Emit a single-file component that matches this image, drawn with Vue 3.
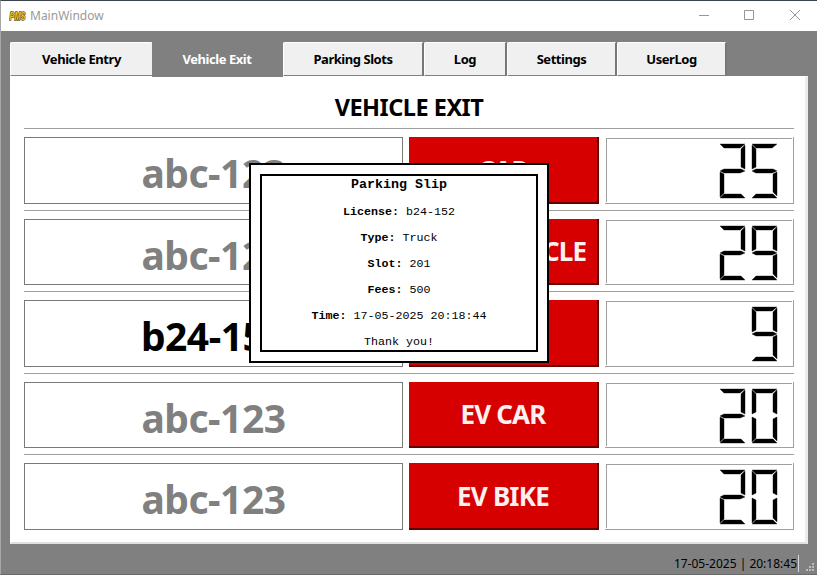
<script setup>
import { ref } from 'vue'

const tabs = [
  { label: 'Vehicle Entry', size: 'entry' },
  { label: 'Vehicle Exit', size: 'exit' },
  { label: 'Parking Slots', size: 'slots' },
  { label: 'Log', size: 'log' },
  { label: 'Settings', size: 'settings' },
  { label: 'UserLog', size: 'user' },
]
const active = ref('Vehicle Exit')

const rows = [
  { plate: 'abc-123', type: 'CAR', free: '25' },
  { plate: 'abc-123', type: 'MOTORCYCLE', free: '29' },
  { plate: 'b24-152', type: 'TRUCK', free: '9', filled: true },
  { plate: 'abc-123', type: 'EV CAR', free: '20' },
  { plate: 'abc-123', type: 'EV BIKE', free: '20' },
]

const slip = [
  ['License:', 'b24-152'],
  ['Type:', 'Truck'],
  ['Slot:', '201'],
  ['Fees:', '500'],
  ['Time:', '17-05-2025 20:18:44'],
]

// Seven-segment outlines on a 27 x 56 cell
const segments = {
  a: '1,1 26,1 21,5 5,5',
  b: '26,2 26,26 22,24 22,6',
  c: '26,29 26,53 22,49 22,31',
  d: '1,55 26,55 22,51 5,51',
  e: '1,29 5,31 5,50 1,54',
  f: '1,2 5,6 5,24 1,26',
  g: '1,28 5,26 22,26 26,28 21,30 5,30',
}
const lit = {
  0: 'abcdef',
  2: 'abged',
  5: 'afgcd',
  9: 'abcdfg',
}
</script>

<template>
  <div class="window">
    <header class="titlebar">
      <svg class="logo" width="18" height="12" viewBox="0 0 18 12">
        <text x="0.5" y="10" textLength="16" lengthAdjust="spacingAndGlyphs">PMS</text>
      </svg>
      <span class="caption">MainWindow</span>
      <svg class="controls" width="103" height="12" viewBox="0 0 103 12">
        <path d="M0 5.5H10M45.5 .5H54.5V9.5H45.5ZM91 0L101 10M101 0L91 10" />
      </svg>
    </header>

    <nav class="tabs">
      <button
        v-for="tab in tabs"
        :key="tab.label"
        :class="['tab', tab.size, { active: tab.label === active }]"
        @click="active = tab.label"
      >{{ tab.label }}</button>
    </nav>

    <main class="panel">
      <h1><span>VEHICLE EXIT</span></h1>
      <section v-for="(row, i) in rows" :key="i" class="row">
        <div :class="['plate', { filled: row.filled }]"><span>{{ row.plate }}</span></div>
        <button class="type"><span>{{ row.type }}</span></button>
        <div class="lcd">
          <div class="lcd-face">
            <svg v-for="(d, n) in row.free" :key="n" width="27" height="56" viewBox="0 0 27 56">
              <g v-for="s in lit[d]" :key="s">
                <polygon class="shade" :points="segments[s]" />
                <polygon :points="segments[s]" />
              </g>
            </svg>
          </div>
        </div>
      </section>
    </main>

    <footer class="status">
      <span class="clock">17-05-2025 | 20:18:45</span>
      <svg class="grip" width="9" height="9" viewBox="0 0 9 9">
        <path d="M6 0h2v2h-2zM3 3h2v2h-2zM6 3h2v2h-2zM0 6h2v2h-2zM3 6h2v2h-2zM6 6h2v2h-2z" />
      </svg>
    </footer>

    <div class="dialog">
      <div class="slip">
        <p class="slip-title">Parking Slip</p>
        <p v-for="[name, value] in slip" :key="name"><b>{{ name }}</b> {{ value }}</p>
        <p>Thank you!</p>
      </div>
    </div>
  </div>
</template>

<style>
body {
  margin: 0;
  overflow: hidden;
}
</style>

<style scoped>
* {
  box-sizing: border-box;
}
.window {
  position: relative;
  width: 817px;
  height: 575px;
  display: flex;
  flex-direction: column;
  background: #808080;
  border-top: 1px solid #3b444d;
  border-left: 1px solid #a6a6a6;
  border-bottom: 1px solid #686868;
  font-family: "Noto Sans", "Open Sans", sans-serif;
  color: #000;
}
.titlebar {
  height: 30px;
  flex: none;
  display: flex;
  align-items: center;
  padding: 0 17px 0 8px;
  background: #fff;
}
.logo text {
  font: italic 900 10px "Liberation Sans", sans-serif;
  fill: #edc51c;
  stroke: #60501a;
  stroke-width: 1.4px;
  paint-order: stroke;
}
.caption {
  margin-left: 3px;
  font-size: 12px;
  line-height: 20px;
  color: #999;
}
.controls {
  margin-left: auto;
  margin-right: -2px;
  fill: none;
  stroke: #969696;
}
.tabs {
  height: 45px;
  flex: none;
  display: flex;
  align-items: flex-end;
  padding-left: 9px;
}
.tab {
  height: 34px;
  padding: 0 0 1px;
  border: solid;
  border-width: 1px 2px 1px 1px;
  border-color: #fff #777 #808080 #fff;
  border-radius: 2px 1px 0 0;
  background: #f0f0f0;
  color: #000;
  font: bold 13px "Noto Sans", sans-serif;
  letter-spacing: -0.45px;
  white-space: nowrap;
}
.tab.active {
  background: #808080;
  border-color: #808080;
  color: #fff;
  height: 35px;
  margin-bottom: -1px;
  position: relative;
}
.entry { width: 142px; border-right-width: 0; }
.exit { width: 131px; }
.slots { width: 141px; }
.log { width: 83px; }
.settings { width: 110px; }
.user { width: 110px; }
.panel {
  width: 798px;
  height: 468px;
  flex: none;
  margin-left: 9px;
  padding: 0 11px 0 13px;
  background: #fff;
  border: 1px solid #fff;
  border-right: 3px solid #ececec;
  border-bottom: 2px solid #e0e0e0;
}
h1 {
  margin: 0;
  height: 51px;
  padding-top: 9px;
  font-size: 23.5px;
  line-height: 42px;
  font-weight: bold;
  text-align: center;
  letter-spacing: -0.5px;
}
.row {
  display: grid;
  grid-template-columns: 379px 190px 189px;
  column-gap: 6px;
  width: 770px;
  height: 82px;
  padding: 8px 0 6px;
  border-top: 1px solid #a0a0a0;
}
.row:nth-of-type(even) {
  height: 81px;
}
.plate {
  display: flex;
  align-items: center;
  justify-content: center;
  border: 1px solid #7a7a7a;
  color: #808080;
  font-size: 39px;
  font-weight: bold;
  line-height: 50px;
  letter-spacing: -0.5px;
  padding-top: 5px;
}
.plate.filled {
  color: #000;
}
.type {
  padding: 0;
  border: solid;
  border-width: 0 2px 2px 0;
  border-color: #600000;
  background: #d60000;
  color: #fff0f0;
  font: bold 26px "Noto Sans", sans-serif;
  letter-spacing: -0.8px;
}
.lcd {
  border: solid #a0a0a0;
  border-width: 0 1px 1px 0;
  padding: 1px 1px 1px 1px;
}
.lcd-face {
  height: 100%;
  display: flex;
  justify-content: flex-end;
  gap: 5px;
  padding: 4px 14px 0 0;
  border: solid #a0a0a0;
  border-width: 1px 0 0 1px;
}
.shade {
  fill: #a0a0a0;
  stroke: #a0a0a0;
  stroke-width: 1px;
}
.status {
  flex: 1;
  display: flex;
  justify-content: flex-end;
  align-items: flex-end;
  padding-right: 2px;
}
.clock {
  height: 17px;
  margin-bottom: 2px;
  padding-right: 1px;
  border-right: 1px solid #d8d8d8;
  font-size: 12px;
  line-height: 18px;
}
.grip {
  margin: 0 0 2px 7px;
  fill: #bcbcbc;
}
.dialog {
  position: absolute;
  left: 248px;
  top: 162px;
  width: 300px;
  height: 200px;
  padding: 9px;
  background: #fff;
  border: 2px solid #000;
}
.slip {
  height: 178px;
  border: 2px solid #000;
  font-family: "Liberation Mono", monospace;
  font-size: 11.67px;
  text-align: center;
  white-space: nowrap;
}
.slip p {
  margin: 0;
  height: 26px;
  line-height: 20px;
}
.slip .slip-title {
  font-size: 13.33px;
  font-weight: bold;
  line-height: 18px;
}
</style>
